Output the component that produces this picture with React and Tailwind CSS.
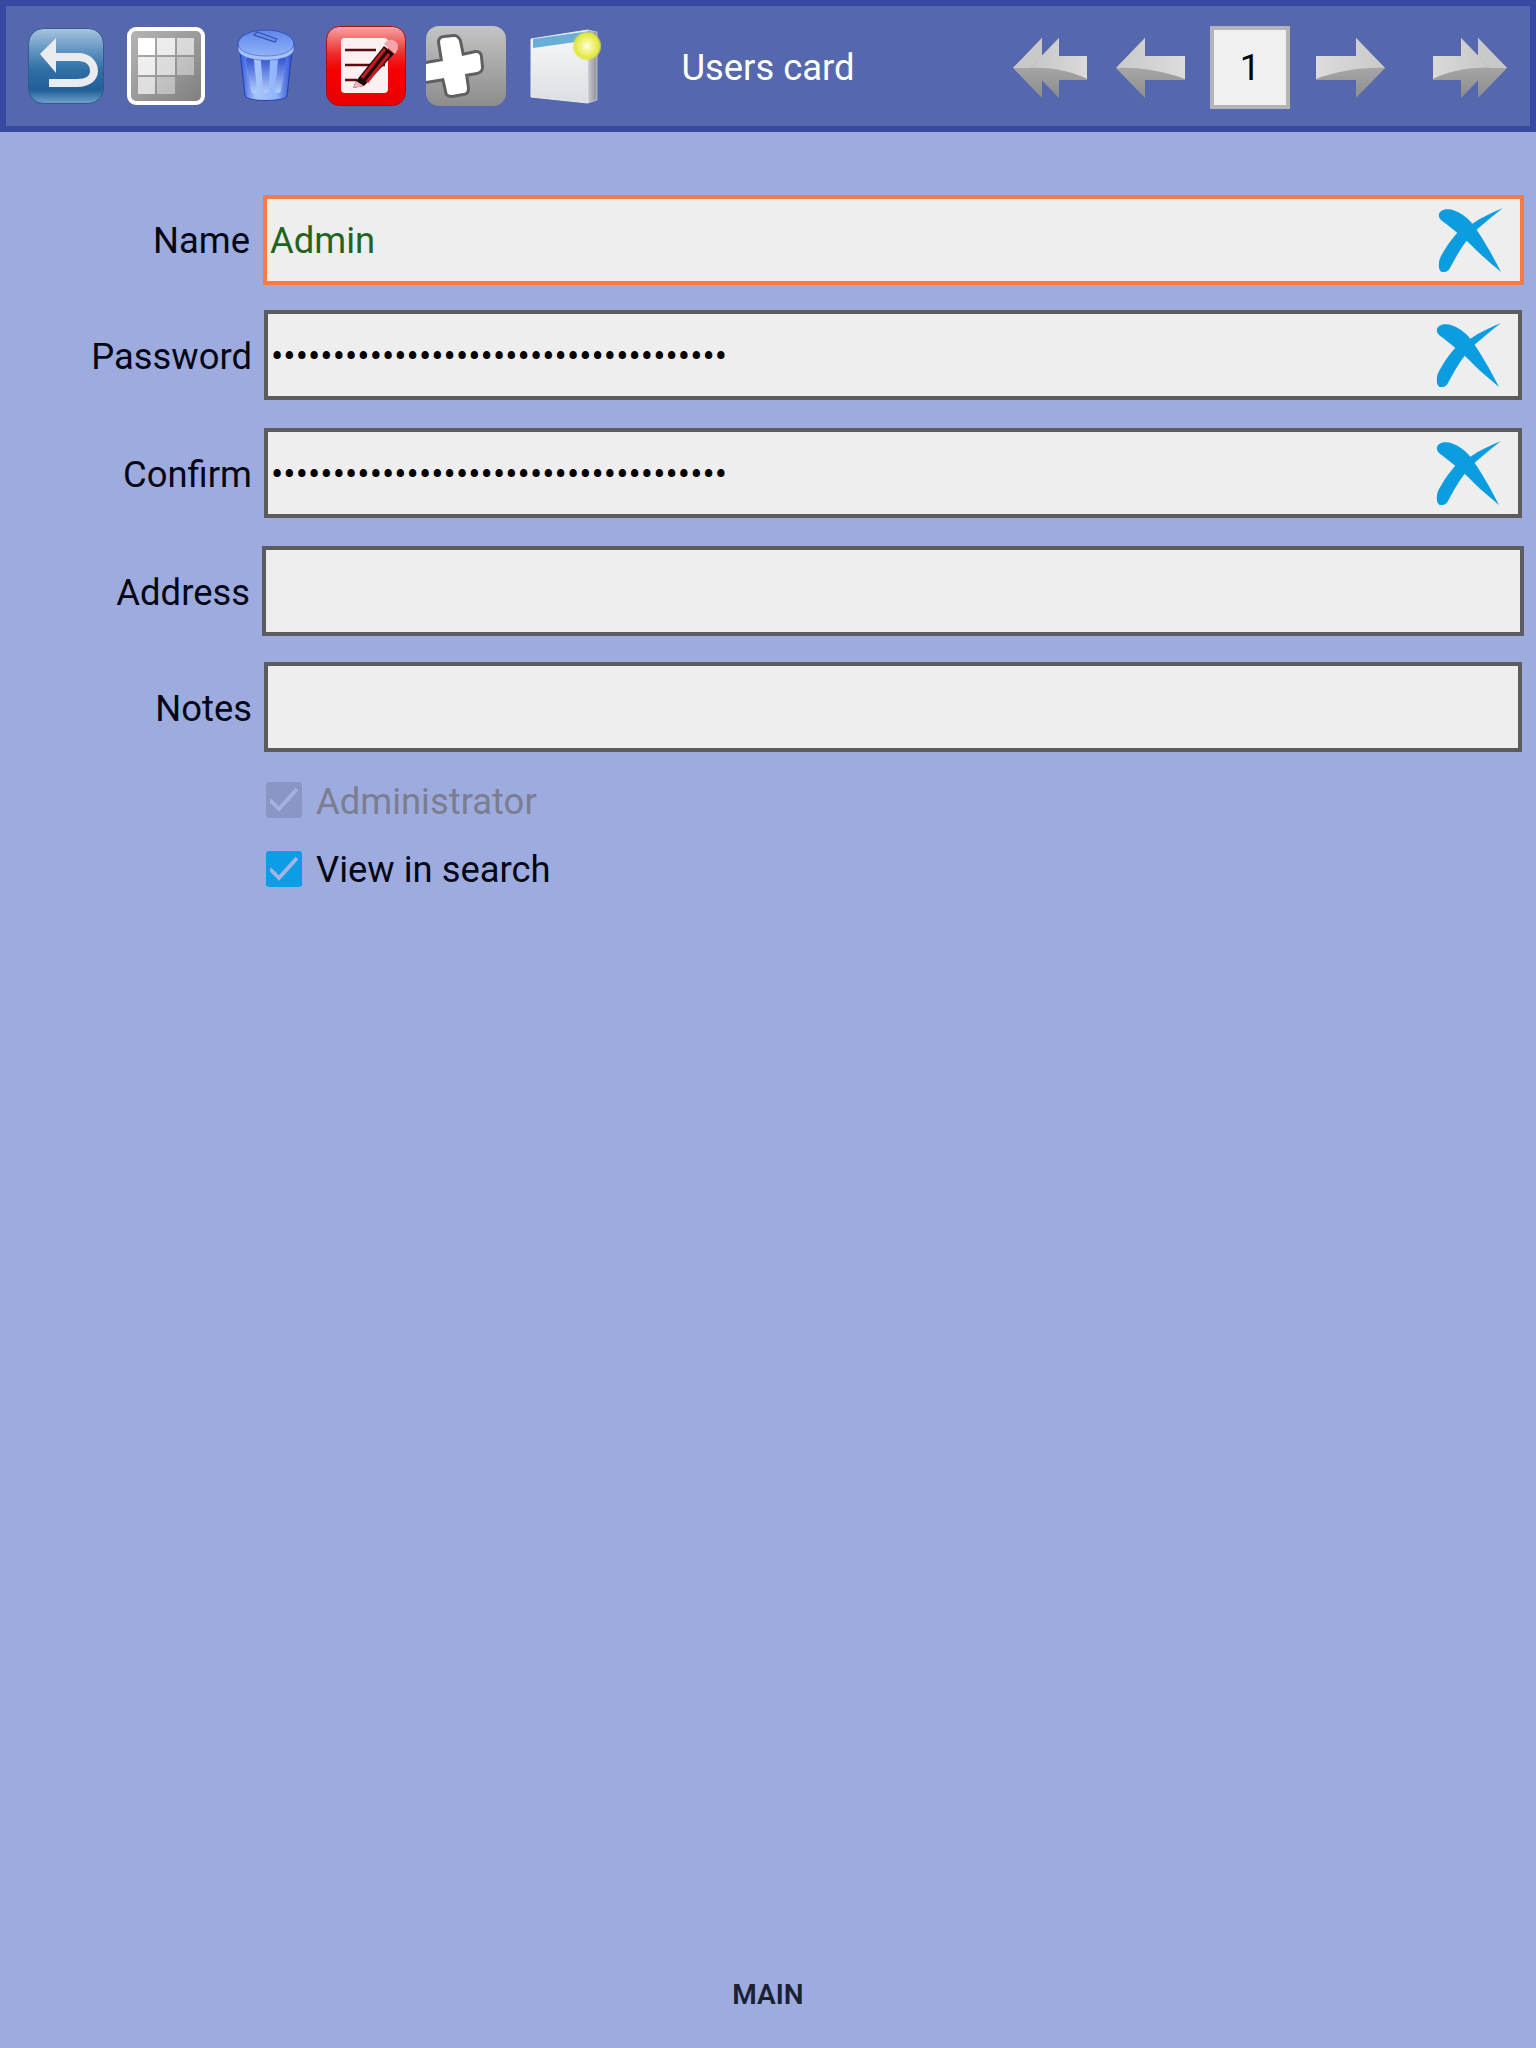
import React from "react";

const Back = () => (
  <svg width="76" height="76" viewBox="0 0 76 76" className="block">
    <defs>
      <linearGradient id="bk" x1="0" y1="0" x2="0" y2="1">
        <stop offset="0" stopColor="#a9c4de" />
        <stop offset="0.3" stopColor="#5f93c1" />
        <stop offset="0.55" stopColor="#2f6fa6" />
        <stop offset="0.82" stopColor="#215f98" />
        <stop offset="1" stopColor="#6fa3cc" />
      </linearGradient>
    </defs>
    <rect x="0.5" y="0.5" width="75" height="75" rx="15" fill="url(#bk)" stroke="#2f5b8c" />
    <path d="M28 10 L12 26 L28 45 L28 33 L50 33 C58 33 62 37 62 43 C62 48 58 51 49 51 L21 51 L21 59 L49 59 C62 59 70 52 70 43 C70 33 62 25 50 25 L28 25 Z" fill="#e9ebee" />
  </svg>
);

const Cell = ({ o }) => <div className="bg-white" style={{ opacity: o }} />;

const GridIcon = () => (
  <div className="w-[78px] h-[78px] rounded-[9px] border-[4px] border-white bg-gradient-to-br from-[#b5b5b5] to-[#808080] p-[7px]">
    <div className="grid grid-cols-3 grid-rows-3 gap-[2px] w-full h-full">
      {[1, 0.8, 0.62, 0.82, 0.65, 0.42, 0.68, 0.42, 0].map((o, i) => (
        <Cell key={i} o={o} />
      ))}
    </div>
  </div>
);

const Trash = () => (
  <svg width="58" height="76" viewBox="0 0 58 76" className="block">
    <defs>
      <linearGradient id="tr" x1="0" y1="0" x2="1" y2="0">
        <stop offset="0" stopColor="#2f55dd" />
        <stop offset="0.3" stopColor="#a8c6fc" />
        <stop offset="0.7" stopColor="#8fb4fa" />
        <stop offset="1" stopColor="#2f4fd0" />
      </linearGradient>
      <linearGradient id="trl" x1="0" y1="0" x2="0" y2="1">
        <stop offset="0" stopColor="#5f86ea" />
        <stop offset="1" stopColor="#94b6f8" />
      </linearGradient>
      <linearGradient id="trf" x1="0" y1="0" x2="0" y2="1">
        <stop offset="0" stopColor="#2d4fd0" />
        <stop offset="1" stopColor="#b4cdfb" />
      </linearGradient>
    </defs>
    <path d="M3 24 L8 68 C10 74 48 74 50 68 L55 24 Z" fill="url(#tr)" stroke="#2440ad" strokeWidth="1" />
    <path d="M9 33 C9 27 17 27 17 33 L20 62 C20 66 14 66 14 62 Z" fill="url(#trf)" />
    <path d="M24 33 C24 27 33 27 33 33 L32 62 C32 66 26 66 26 62 Z" fill="url(#trf)" />
    <path d="M41 33 C41 27 49 27 49 33 L44 62 C44 66 38 66 38 62 Z" fill="url(#trf)" />
    <ellipse cx="29" cy="16" rx="28" ry="14" fill="url(#trl)" stroke="#2f4fc4" strokeWidth="1" />
    <path d="M1 16 C1 32 57 32 57 16 L57 21 C57 36 1 36 1 21 Z" fill="#a6c3f9" stroke="#3a59c8" strokeWidth="0.6" />
    <path d="M17 7 L20 4 L40 11 L38 14 Z" fill="#6a8fe6" stroke="#2f4fb8" strokeWidth="1.2" />
  </svg>
);

const Edit = () => (
  <svg width="80" height="80" viewBox="0 0 80 80" className="block">
    <defs>
      <linearGradient id="ed" x1="0" y1="0" x2="0" y2="1">
        <stop offset="0" stopColor="#f4a6a6" />
        <stop offset="0.35" stopColor="#ee2a2a" />
        <stop offset="0.55" stopColor="#f50000" />
        <stop offset="1" stopColor="#e80000" />
      </linearGradient>
    </defs>
    <rect x="0.5" y="0.5" width="79" height="79" rx="13" fill="url(#ed)" stroke="#a80d1c" />
    <rect x="15" y="12" width="47" height="55" rx="4" fill="#fdf0f0" />
    <path d="M19 24 H50 M19 39 H59 M19 54 H31" stroke="#5a0d12" strokeWidth="2.4" />
    <path d="M30 55 L58 20 L68 28 L38 60 L27 62 Z" fill="#1a0a0a" />
    <path d="M36 52 L59 23 M41 56 L63 28" stroke="#cc1820" strokeWidth="3" />
    <path d="M58 18 C62 12 68 13 71 17 C73 20 72 24 69 28 Z" fill="#f4a6ac" />
    <path d="M30 55 L38 60 L27 62 Z" fill="#eab4b4" />
  </svg>
);

const Plus = () => (
  <div className="w-[80px] h-[80px] rounded-[13px] bg-gradient-to-b from-[#c4c4c4] to-[#8d8d8d] overflow-hidden">
    <svg width="80" height="80" viewBox="0 0 80 80" className="block">
      <path d="M-6 39 L17 35 L14 16 C14 13 16 12 18 12 L28 11 C31 11 32 13 33 15 L36 30 L50 27 C53 27 54 29 54 31 L55 41 C55 44 54 45 51 46 L39 48 L41 62 C41 65 40 67 37 67 L26 69 C23 69 21 68 21 65 L18 52 L-6 56 Z" fill="#fff" stroke="#5f5f5f" strokeWidth="6" strokeLinejoin="round" paintOrder="stroke" />
    </svg>
  </div>
);

const WindowIcon = () => (
  <svg width="72" height="78" viewBox="0 0 72 78" className="block">
    <defs>
      <linearGradient id="wn" x1="0" y1="0" x2="0" y2="1">
        <stop offset="0" stopColor="#f8f9fb" />
        <stop offset="1" stopColor="#dcdee3" />
      </linearGradient>
      <linearGradient id="ws" x1="0" y1="0" x2="1" y2="0">
        <stop offset="0" stopColor="#c9cbd0" />
        <stop offset="1" stopColor="#8e9097" />
      </linearGradient>
      <radialGradient id="gl">
        <stop offset="0" stopColor="#fdfde8" />
        <stop offset="0.4" stopColor="#f2f48a" />
        <stop offset="0.85" stopColor="#e3e63c" />
        <stop offset="1" stopColor="#dfe334" stopOpacity="0.3" />
      </radialGradient>
    </defs>
    <path d="M1 12 L58 3 L58 76 L1 70 Z" fill="url(#wn)" stroke="#e9ebf2" />
    <path d="M58 3 L67 5 L67 73 L58 76 Z" fill="url(#ws)" stroke="#e3e4ea" strokeWidth="0.6" />
    <path d="M3 12 L60 4 L60 13 L3 21 Z" fill="#68aed6" />
    <circle cx="57" cy="19" r="14.5" fill="url(#gl)" />
  </svg>
);

const Arrow = ({ id, flip }) => (
  <svg width="70" height="60" viewBox="0 0 70 60" className="block" style={flip ? { transform: "scaleX(-1)" } : undefined}>
    <defs>
      <linearGradient id={id} x1="0" y1="0" x2="0" y2="1">
        <stop offset="0" stopColor="#bdbdbd" />
        <stop offset="1" stopColor="#8e8e8e" />
      </linearGradient>
      <linearGradient id={`${id}t`} x1="0" y1="0" x2="1" y2="0">
        <stop offset="0" stopColor="#c9c9c9" />
        <stop offset="1" stopColor="#dcdcdc" />
      </linearGradient>
    </defs>
    <path d="M0 30 L29 0 L29 18 L69 18 L69 42 L29 42 L29 60 Z" fill={`url(#${id})`} />
    <path d="M0 30 L29 0 L29 18 L69 18 L69 41 C50 34 25 29 0 30 Z" fill={`url(#${id}t)`} />
  </svg>
);

const DoubleArrow = ({ id, flip }) => (
  <svg width="75" height="60" viewBox="0 0 75 60" className="block" style={flip ? { transform: "scaleX(-1)" } : undefined}>
    <defs>
      <linearGradient id={id} x1="0" y1="0" x2="0" y2="1">
        <stop offset="0" stopColor="#bdbdbd" />
        <stop offset="1" stopColor="#8c8c8c" />
      </linearGradient>
      <linearGradient id={`${id}t`} x1="0" y1="0" x2="1" y2="0">
        <stop offset="0" stopColor="#c6c6c6" />
        <stop offset="1" stopColor="#dadada" />
      </linearGradient>
    </defs>
    <path d="M0 30 L29 0 L29 60 Z" fill={`url(#${id})`} />
    <path d="M0 30 L29 0 L29 30 Z" fill="#c9c9c9" />
    <rect x="45" y="18" width="29" height="24" fill="#d2d2d2" />
    <path d="M17 30 L46 0 L46 18 L74 18 L74 42 L46 42 L46 60 Z" fill={`url(#${id})`} />
    <path d="M17 30 L46 0 L46 18 L74 18 L74 41 C60 34 40 29 17 30 Z" fill={`url(#${id}t)`} />
  </svg>
);

const Clear = () => (
  <svg width="65" height="64" viewBox="0 0 65 64" className="block shrink-0">
    <path d="M1 6 C3 0 14 -1 25 7 C31 11 35 16 38 21 C43 28 49 38 54 47 C57 53 60 58 63 64 C55 57 46 50 37 41 C31 35 27 31 22 27 C17 23 12 19 7 15 C4 13 0 10 1 6 Z" fill="#0b9de0" />
    <path d="M65 0 C55 4 44 9 34 16 C30 18 26 20 22 22 C17 27 13 32 9 38 C5 45 1 50 1 55 C0 62 3 65 6 64 C9 64 11 62 12 60 C14 56 16 53 18 49 C22 42 26 36 30 31 C34 26 38 22 43 18 C50 12 57 6 65 0 Z" fill="#0b9de0" />
  </svg>
);

const Row = ({ label, labelClass, rowClass, fieldClass, text, textClass, clear }) => (
  <div className={`flex items-center ${rowClass}`}>
    <div className={`text-right text-[36.4px] leading-none text-[#050714] ${labelClass}`}>{label}</div>
    <div className={`h-[90px] border-[4px] bg-[#eeeeee] flex items-center justify-between ${fieldClass}`}>
      <div className={textClass}>{text}</div>
      {clear && <div className="mr-[17px]"><Clear /></div>}
    </div>
  </div>
);

const dots = "•".repeat(37);

const Check = ({ boxClass, stroke }) => (
  <div className={`w-[36px] h-[36px] rounded-[3px] flex items-center justify-center ${boxClass}`}>
    <svg width="28" height="28" viewBox="0 0 28 28">
      <path d="M0 14 L9 23 L27 3" fill="none" stroke={stroke} strokeWidth="3.8" />
    </svg>
  </div>
);

export default function App() {
  return (
    <div className="min-h-screen h-[2048px] flex flex-col bg-[#9eabdf]" style={{ fontFamily: "Roboto, 'Noto Sans', sans-serif" }}>
      <header className="h-[132px] shrink-0 border-[6px] border-[#3549a1] bg-[#5568ae] grid grid-cols-[1fr_auto_1fr] items-center">
        <div className="flex items-center pl-[22px]">
          <Back />
          <div className="ml-[23px]"><GridIcon /></div>
          <div className="ml-[32px]"><Trash /></div>
          <div className="ml-[31px]"><Edit /></div>
          <div className="ml-[20px]"><Plus /></div>
          <div className="ml-[24px]"><WindowIcon /></div>
        </div>
        <div className="text-white text-[36.4px] leading-none pt-[4px]">Users card</div>
        <div className="flex items-center justify-end pr-[23px]">
          <div className="mt-[4px]"><DoubleArrow id="da1" /></div>
          <div className="ml-[28px] mt-[4px]"><Arrow id="a1" /></div>
          <div className="ml-[24px] mt-[3px] w-[80px] h-[83px] border-[4px] border-[#b4b4b6] bg-[#f0f0f0] flex items-center justify-center pt-[1px] text-[36.4px] text-[#050505]">1</div>
          <div className="ml-[25px] mt-[4px]"><Arrow id="a2" flip /></div>
          <div className="ml-[47px] mt-[4px]"><DoubleArrow id="da2" flip /></div>
        </div>
      </header>

      <main className="flex-1 flex flex-col">
        <Row
          label="Name"
          labelClass="w-[250px] pt-[2px]"
          rowClass="mt-[63px]"
          fieldClass="ml-[13px] w-[1261px] border-[#f97a42]"
          text="Admin"
          textClass="ml-[3px] pt-[2px] text-[36.4px] text-[#1f6421]"
          clear
        />
        <Row
          label="Password"
          labelClass="w-[252px] pt-[4px]"
          rowClass="mt-[25px]"
          fieldClass="ml-[12px] w-[1258px] border-[#5c5c5e]"
          text={dots}
          textClass="ml-[3px] pt-[4px] text-[36.4px] tracking-[0.05px] text-black"
          clear
        />
        <Row
          label="Confirm"
          labelClass="w-[252px] pt-[4px]"
          rowClass="mt-[28px]"
          fieldClass="ml-[12px] w-[1258px] border-[#5c5c5e]"
          text={dots}
          textClass="ml-[3px] pt-[4px] text-[36.4px] tracking-[0.05px] text-black"
          clear
        />
        <Row
          label="Address"
          labelClass="w-[250px] pt-[4px]"
          rowClass="mt-[28px]"
          fieldClass="ml-[12px] w-[1262px] border-[#5c5c5e]"
        />
        <Row
          label="Notes"
          labelClass="w-[252px] pt-[4px]"
          rowClass="mt-[26px]"
          fieldClass="ml-[12px] w-[1258px] border-[#5c5c5e]"
        />
        <div className="ml-[266px] mt-[28px] flex items-center gap-[14px]">
          <Check boxClass="bg-[#8a96c5]" stroke="#a5b1e0" />
          <span className="text-[36.4px] leading-none pt-[4px] text-[#7a7e8f]">Administrator</span>
        </div>
        <div className="ml-[266px] mt-[28px] flex items-center gap-[14px]">
          <Check boxClass="bg-[#0b9de6]" stroke="#a5b4e6" />
          <span className="text-[36.4px] leading-none pt-[4px] text-[#050714]">View in search</span>
        </div>
        <div className="mt-auto pb-[39px] text-center text-[28px] leading-none font-semibold text-[#1b2033]">MAIN</div>
      </main>
    </div>
  );
}
